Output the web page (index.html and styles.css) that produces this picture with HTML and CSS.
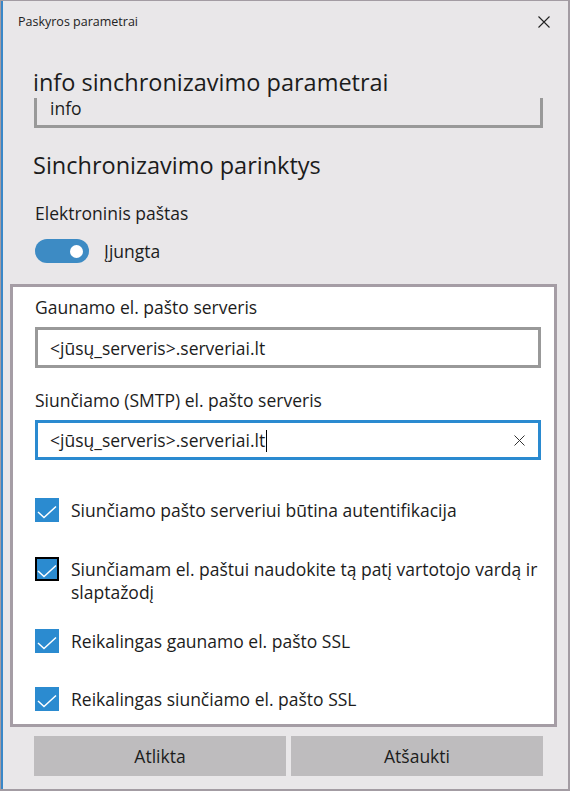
FILE: index.html
```html
<!DOCTYPE html>
<html lang="lt">
<head>
<meta charset="utf-8">
<title>Paskyros parametrai</title>
<link rel="stylesheet" href="styles.css">
</head>
<body>
<div class="window">
  <div class="titlebar">
    <span class="title">Paskyros parametrai</span>
    <svg class="close" width="12" height="12" viewBox="0 0 12 12"><path d="M0.5 0.5L11.5 11.5M11.5 0.5L0.5 11.5" stroke="#222" stroke-width="1.1" fill="none"/></svg>
  </div>
  <div class="content">
    <div class="heading">info sinchronizavimo parametrai</div>
    <div class="box-clipped"><span>info</span></div>
    <div class="subheading">Sinchronizavimo parinktys</div>
    <div class="label">Elektroninis paštas</div>
    <div class="toggle-row">
      <span class="toggle"><span class="knob"></span></span>
      <span class="toggle-text">Įjungta</span>
    </div>
  </div>
  <div class="panel">
    <div class="field-label">Gaunamo el. pašto serveris</div>
    <div class="textbox"><span>&lt;jūsų_serveris&gt;.serveriai.lt</span></div>
    <div class="field-label second">Siunčiamo (SMTP) el. pašto serveris</div>
    <div class="textbox focused"><span>&lt;jūsų_serveris&gt;.serveriai.lt<span class="caret"></span></span>
      <svg class="clear" width="11" height="11" viewBox="0 0 11 11"><path d="M0.5 0.5L10.5 10.5M10.5 0.5L0.5 10.5" stroke="#333" stroke-width="1" fill="none"/></svg>
    </div>
    <div class="checks">
      <div class="check">
        <span class="cb"><svg width="24" height="24" viewBox="0 0 24 24"><polyline points="3,14 9,19.5 21,8.5" fill="none" stroke="#fff" stroke-width="1.5"/></svg></span>
        <span class="check-text">Siunčiamo pašto serveriui būtina autentifikacija</span>
      </div>
      <div class="check">
        <span class="cb focus"><svg width="20" height="20" viewBox="2 2 20 20"><polyline points="3,14 9,19.5 21,8.5" fill="none" stroke="#fff" stroke-width="1.5"/></svg></span>
        <span class="check-text">Siunčiamam el. paštui naudokite tą patį vartotojo vardą ir slaptažodį</span>
      </div>
      <div class="check">
        <span class="cb"><svg width="24" height="24" viewBox="0 0 24 24"><polyline points="3,14 9,19.5 21,8.5" fill="none" stroke="#fff" stroke-width="1.5"/></svg></span>
        <span class="check-text">Reikalingas gaunamo el. pašto SSL</span>
      </div>
      <div class="check">
        <span class="cb"><svg width="24" height="24" viewBox="0 0 24 24"><polyline points="3,14 9,19.5 21,8.5" fill="none" stroke="#fff" stroke-width="1.5"/></svg></span>
        <span class="check-text">Reikalingas siunčiamo el. pašto SSL</span>
      </div>
    </div>
  </div>
  <div class="buttons">
    <button class="btn">Atlikta</button>
    <button class="btn">Atšaukti</button>
  </div>
</div>
</body>
</html>
```

FILE: styles.css
```css
* { box-sizing: border-box; }
html, body { margin: 0; padding: 0; }
body {
  font-family: "Open Sans", "Noto Sans", sans-serif;
  color: #1c1c1c;
  background: #e9e7e9;
}
.window {
  width: 570px;
  height: 791px;
  background: #e9e7e9;
  border-top: 1px solid #a39ca3;
  border-right: 2px solid #a39ca3;
  border-bottom: 2px solid #a39ca3;
  border-left: 1px solid #a39ca3;
  box-shadow: inset 2px 0 0 #3a87c8;
  display: flex;
  flex-direction: column;
  overflow: hidden;
}
.titlebar {
  height: 41px;
  display: flex;
  align-items: center;
  justify-content: space-between;
  padding: 0 18px 0 17px;
}
.title { font-size: 12.5px; color: #222; }
.close { display: block; }
.content {
  padding-left: 32px;
  padding-right: 25px;
}
.heading {
  font-size: 23.5px;
  line-height: 32px;
  margin-top: 24px;
}
.box-clipped {
  height: 30px;
  border: 3px solid #999;
  border-top: none;
  margin-left: 1px;
  padding-left: 13px;
  font-size: 17.5px;
  line-height: 21px;
}
.subheading {
  font-size: 23.5px;
  line-height: 28px;
  margin-top: 23px;
}
.label {
  font-size: 17.5px;
  line-height: 22px;
  margin-top: 23px;
  padding-left: 2px;
}
.toggle-row {
  display: flex;
  align-items: center;
  margin-top: 15px;
  padding-left: 2px;
}
.toggle {
  width: 54px;
  height: 24px;
  border-radius: 12px;
  background: #3d8bc4;
  display: flex;
  align-items: center;
  justify-content: flex-end;
  padding-right: 6px;
}
.knob {
  width: 13px;
  height: 13px;
  border-radius: 50%;
  background: #fff;
}
.toggle-text { font-size: 17.5px; margin-left: 15px; }
.panel {
  margin: 21px 11px 0 9px;
  background: #fff;
  border: 3px solid #a59da5;
  padding: 8px 8px 0 22px;
  height: 443px;
}
.field-label {
  font-size: 17.5px;
  line-height: 24px;
}
.field-label.second { margin-top: 20px; }
.textbox {
  margin-top: 8px;
  height: 41px;
  border: 3px solid #999;
  display: flex;
  align-items: center;
  justify-content: space-between;
  padding: 0 13px 0 12px;
  margin-right: 5px;
  font-size: 17.5px;
}
.textbox.focused { border-color: #2a8ad0; height: 40px; }
.caret {
  display: inline-block;
  width: 1px;
  height: 22px;
  background: #000;
  vertical-align: -5px;
  margin-left: 1px;
}
.clear { display: block; }
.checks {
  display: flex;
  flex-direction: column;
  margin-top: 38px;
}
.check {
  display: flex;
  align-items: flex-start;
  font-size: 17.5px;
  line-height: 23px;
}
.check:nth-child(2) { margin-top: 35px; }
.check:nth-child(3) { margin-top: 25px; }
.check:nth-child(4) { margin-top: 34px; }
.cb {
  flex: none;
  width: 24px;
  height: 24px;
  background: #2b8bd0;
  margin-right: 12px;
}
.cb svg { display: block; }
.cb.focus { border: 2px solid #000; }
.check-text { padding-top: 1px; }
.buttons {
  display: flex;
  gap: 5px;
  padding: 9px 25px 0 33px;
}
.btn {
  flex: 1;
  height: 40px;
  border: none;
  background: #bebcbe;
  font-family: inherit;
  font-size: 17.5px;
  color: #1c1c1c;
}
```
